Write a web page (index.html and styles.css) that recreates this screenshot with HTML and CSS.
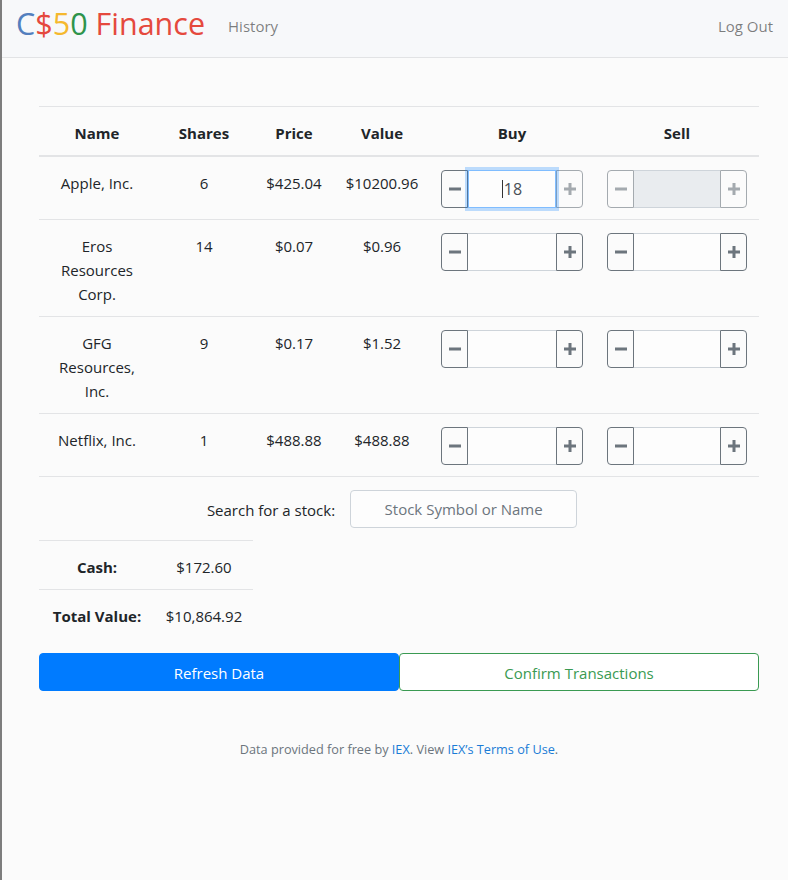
FILE: index.html
```html
<!DOCTYPE html>
<html lang="en">
<head>
<meta charset="utf-8">
<title>C$50 Finance: Portfolio</title>
<link rel="stylesheet" href="styles.css">
</head>
<body>
<nav class="navbar">
  <a class="brand" href="#"><span class="b">C</span><span class="r">$</span><span class="y">5</span><span class="g">0</span> <span class="r">Finance</span></a>
  <a class="nav-link" href="#">History</a>
  <a class="nav-link logout" href="#">Log Out</a>
</nav>

<main class="container">
  <table class="table main-table">
    <colgroup>
      <col class="c-name"><col class="c-shares"><col class="c-price"><col class="c-value"><col class="c-buy"><col class="c-sell">
    </colgroup>
    <thead>
      <tr><th>Name</th><th>Shares</th><th>Price</th><th>Value</th><th>Buy</th><th>Sell</th></tr>
    </thead>
    <tbody>
      <tr>
        <td>Apple, Inc.</td><td>6</td><td>$425.04</td><td>$10200.96</td>
        <td>
          <div class="spinner">
            <button class="sbtn left"><svg width="12" height="12" viewBox="0 0 12 12"><rect x="0" y="4.5" width="12" height="3"/></svg></button>
            <div class="sinput focus"><span class="caret"></span>18</div>
            <button class="sbtn right dis"><svg width="12" height="12" viewBox="0 0 12 12"><rect x="0" y="4.5" width="12" height="3"/><rect x="4.5" y="0" width="3" height="12"/></svg></button>
          </div>
        </td>
        <td>
          <div class="spinner">
            <button class="sbtn left dis"><svg width="12" height="12" viewBox="0 0 12 12"><rect x="0" y="4.5" width="12" height="3"/></svg></button>
            <div class="sinput disabled"></div>
            <button class="sbtn right dis"><svg width="12" height="12" viewBox="0 0 12 12"><rect x="0" y="4.5" width="12" height="3"/><rect x="4.5" y="0" width="3" height="12"/></svg></button>
          </div>
        </td>
      </tr>
      <tr>
        <td>Eros Resources Corp.</td><td>14</td><td>$0.07</td><td>$0.96</td>
        <td>
          <div class="spinner">
            <button class="sbtn left"><svg width="12" height="12" viewBox="0 0 12 12"><rect x="0" y="4.5" width="12" height="3"/></svg></button>
            <div class="sinput"></div>
            <button class="sbtn right"><svg width="12" height="12" viewBox="0 0 12 12"><rect x="0" y="4.5" width="12" height="3"/><rect x="4.5" y="0" width="3" height="12"/></svg></button>
          </div>
        </td>
        <td>
          <div class="spinner">
            <button class="sbtn left"><svg width="12" height="12" viewBox="0 0 12 12"><rect x="0" y="4.5" width="12" height="3"/></svg></button>
            <div class="sinput"></div>
            <button class="sbtn right"><svg width="12" height="12" viewBox="0 0 12 12"><rect x="0" y="4.5" width="12" height="3"/><rect x="4.5" y="0" width="3" height="12"/></svg></button>
          </div>
        </td>
      </tr>
      <tr>
        <td>GFG Resources, Inc.</td><td>9</td><td>$0.17</td><td>$1.52</td>
        <td>
          <div class="spinner">
            <button class="sbtn left"><svg width="12" height="12" viewBox="0 0 12 12"><rect x="0" y="4.5" width="12" height="3"/></svg></button>
            <div class="sinput"></div>
            <button class="sbtn right"><svg width="12" height="12" viewBox="0 0 12 12"><rect x="0" y="4.5" width="12" height="3"/><rect x="4.5" y="0" width="3" height="12"/></svg></button>
          </div>
        </td>
        <td>
          <div class="spinner">
            <button class="sbtn left"><svg width="12" height="12" viewBox="0 0 12 12"><rect x="0" y="4.5" width="12" height="3"/></svg></button>
            <div class="sinput"></div>
            <button class="sbtn right"><svg width="12" height="12" viewBox="0 0 12 12"><rect x="0" y="4.5" width="12" height="3"/><rect x="4.5" y="0" width="3" height="12"/></svg></button>
          </div>
        </td>
      </tr>
      <tr>
        <td>Netflix, Inc.</td><td>1</td><td>$488.88</td><td>$488.88</td>
        <td>
          <div class="spinner">
            <button class="sbtn left"><svg width="12" height="12" viewBox="0 0 12 12"><rect x="0" y="4.5" width="12" height="3"/></svg></button>
            <div class="sinput"></div>
            <button class="sbtn right"><svg width="12" height="12" viewBox="0 0 12 12"><rect x="0" y="4.5" width="12" height="3"/><rect x="4.5" y="0" width="3" height="12"/></svg></button>
          </div>
        </td>
        <td>
          <div class="spinner">
            <button class="sbtn left"><svg width="12" height="12" viewBox="0 0 12 12"><rect x="0" y="4.5" width="12" height="3"/></svg></button>
            <div class="sinput"></div>
            <button class="sbtn right"><svg width="12" height="12" viewBox="0 0 12 12"><rect x="0" y="4.5" width="12" height="3"/><rect x="4.5" y="0" width="3" height="12"/></svg></button>
          </div>
        </td>
      </tr>
    </tbody>
    <tfoot>
      <tr>
        <td colspan="6" class="search-cell">
          <div class="search">
            <label class="search-label">Search for a stock:</label>
            <input class="search-input" type="text" placeholder="Stock Symbol or Name">
          </div>
        </td>
      </tr>
    </tfoot>
  </table>

  <table class="table cash-table">
    <colgroup><col class="c-name"><col class="c-shares"></colgroup>
    <tbody>
      <tr><th>Cash:</th><td>$172.60</td></tr>
      <tr><th>Total Value:</th><td>$10,864.92</td></tr>
    </tbody>
  </table>

  <div class="actions">
    <button class="btn btn-primary">Refresh Data</button>
    <button class="btn btn-outline-success">Confirm Transactions</button>
  </div>
</main>

<footer class="footer">
  Data provided for free by <a href="#">IEX</a>. View <a href="#">IEX’s Terms of Use</a>.
</footer>
</body>
</html>
```

FILE: styles.css
```css
* { box-sizing: border-box; }

html, body {
  margin: 0;
  padding: 0;
}

body {
  background: #fbfbfb;
  color: #212529;
  font-family: "Open Sans", "Noto Sans", sans-serif;
  font-size: 16px;
  line-height: 24px;
  border-left: 2px solid #7d7d7d;
  min-height: 880px;
}

a { text-decoration: none; }

.navbar {
  display: flex;
  align-items: flex-start;
  height: 58px;
  padding: 3px 7px 0 14px;
  background: #f7f8fa;
  border-bottom: 1px solid #e2e3e5;
}

.brand {
  font-size: 30.5px;
  line-height: 40px;
  margin-right: 15px;
}
.brand .b { color: #537fbe; }
.brand .r { color: #e5493d; }
.brand .y { color: #f5b82e; }
.brand .g { color: #2e944b; }

.nav-link {
  color: rgba(0, 0, 0, 0.5);
  padding: 0 8px;
  margin-top: 11px;
  font-size: 15px;
}
.logout { margin-left: auto; }

.container {
  width: 720px;
  margin: 48px 0 0 37px;
}

.table {
  border-collapse: collapse;
  table-layout: fixed;
}

.main-table { width: 720px; }

.c-name { width: 116px; }
.c-shares { width: 98px; }
.c-price { width: 82px; }
.c-value { width: 94px; }
.c-buy { width: 166px; }
.c-sell { width: 164px; }

.table th, .table td {
  padding: 14px 12px 10px;
  text-align: center;
  vertical-align: top;
  border-top: 1px solid #e3e4e6;
  font-size: 15px;
}

.main-table th, .main-table td { padding-left: 6px; padding-right: 6px; }
.main-table td:nth-child(5), .main-table td:nth-child(6) {
  padding: 13px 12px 11px;
}

.main-table thead th {
  border-bottom: 2px solid #e3e4e6;
  font-weight: 700;
}

.spinner {
  display: flex;
  height: 38px;
}

.sbtn {
  width: 27px;
  flex: none;
  display: flex;
  align-items: center;
  justify-content: center;
  border: 1px solid #6c757d;
  background: transparent;
  padding: 0;
  fill: #6c757d;
}
.sbtn.left { border-radius: 4px 0 0 4px; }
.sbtn.right { border-radius: 0 4px 4px 0; }
.sbtn.dis { opacity: 0.6; }

.sinput {
  flex: 1;
  border-top: 1px solid #ced4da;
  border-bottom: 1px solid #ced4da;
  background: #fdfdfd;
  text-align: center;
  line-height: 36px;
  font-size: 16px;
  color: #495057;
}
.sinput.disabled { background: #e9ecef; }
.sinput.focus {
  border: 1px solid #80bdff;
  box-shadow: 0 0 0 3px rgba(0, 123, 255, 0.25);
  position: relative;
  z-index: 1;
}
.caret {
  display: inline-block;
  width: 1px;
  height: 18px;
  background: #333;
  vertical-align: -3px;
  margin-right: 1px;
}

.main-table tfoot td.search-cell { padding: 13px 0 12px; }

.search {
  display: flex;
  align-items: center;
  justify-content: center;
  gap: 15px;
  padding-right: 14px;
}
.search-label { font-size: 15px; padding-top: 2px; }

.search-input {
  width: 227px;
  height: 38px;
  border: 1px solid #ced4da;
  border-radius: 4px;
  background: #fdfdfd;
  font-family: inherit;
  font-size: 15px;
  text-align: center;
  color: #495057;
}
.search-input::placeholder { color: #6c757d; }

.cash-table { width: 214px; }
.cash-table th, .cash-table td { padding-left: 4px; padding-right: 4px; }
.cash-table th { font-weight: 700; }

.actions {
  display: flex;
  margin-top: 15px;
}

.btn {
  flex: 1;
  height: 38px;
  border-radius: 4px;
  font-family: inherit;
  font-size: 15px;
  line-height: 24px;
  padding-top: 2px;
  cursor: pointer;
}
.btn-primary {
  background: #007bff;
  border: 1px solid #007bff;
  color: #fff;
}
.btn-outline-success {
  background: #fff;
  border: 1px solid #3a9a52;
  color: #3a9a52;
}

.footer {
  margin-top: 46px;
  margin-left: 37px;
  width: 720px;
  text-align: center;
  font-size: 12.7px;
  color: #6c757d;
}
.footer a { color: #1a7bd6; }
```
